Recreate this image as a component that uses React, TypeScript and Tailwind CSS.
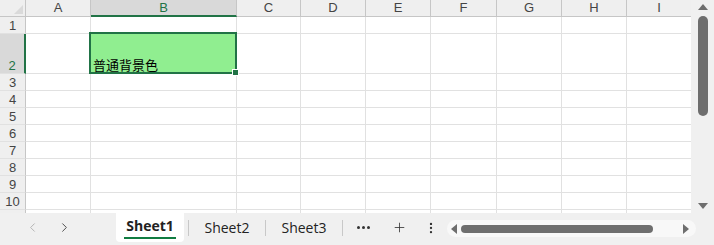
import { ChevronLeft, ChevronRight, Plus, MoreVertical } from 'lucide-react'

const cols = [
  { name: 'A', w: 65 },
  { name: 'B', w: 146 },
  { name: 'C', w: 64 },
  { name: 'D', w: 65 },
  { name: 'E', w: 65 },
  { name: 'F', w: 66 },
  { name: 'G', w: 65 },
  { name: 'H', w: 65 },
  { name: 'I', w: 65 },
]

const rows = [
  { n: '1', h: 17 },
  { n: '2', h: 40 },
  { n: '3', h: 17 },
  { n: '4', h: 17 },
  { n: '5', h: 17 },
  { n: '6', h: 17 },
  { n: '7', h: 17 },
  { n: '8', h: 17 },
  { n: '9', h: 17 },
  { n: '10', h: 17 },
  { n: '', h: 17 },
]

const font = { fontFamily: '"Liberation Sans", Arial, sans-serif' }

function Grid() {
  return (
    <div className="relative flex-1 h-[213px] overflow-hidden bg-white" style={font}>
      {/* column headers */}
      <div className="flex h-[17px]">
        <div className="relative w-[26px] shrink-0 bg-[#efefef] border-r border-b border-[#c6c6c6]">
          <div className="absolute right-[2px] bottom-[2px] w-0 h-0 border-l-[9px] border-l-transparent border-b-[9px] border-b-[#dadada]" />
        </div>
        {cols.map((c) => (
          <div
            key={c.name}
            style={{ width: c.w }}
            className={
              c.name === 'B'
                ? 'shrink-0 flex items-center justify-center text-[13px] bg-[#d9d9d9] text-[#217346] border-r border-[#c6c6c6] border-b-2 border-b-[#217346]'
                : 'shrink-0 flex items-center justify-center text-[13px] bg-[#efefef] text-[#444] border-r border-b border-[#c6c6c6]'
            }
          >
            {c.name}
          </div>
        ))}
      </div>
      {rows.map((r) => (
        <div key={r.n + 'r'} className="flex" style={{ height: r.h }}>
          <div
            className={
              r.n === '2'
                ? 'w-[26px] shrink-0 flex items-end justify-center text-[13px] leading-[15px] bg-[#d9d9d9] text-[#217346] border-r-2 border-r-[#217346] border-b border-b-[#e1e1e1]'
                : 'w-[26px] shrink-0 flex items-end justify-center text-[13px] leading-[15px] bg-[#efefef] text-[#444] border-r border-r-[#c6c6c6] border-b border-b-[#e1e1e1]'
            }
          >
            {r.n}
          </div>
          {cols.map((c) => (
            <div
              key={c.name}
              style={{ width: c.w }}
              className={
                r.n === '2' && c.name === 'B'
                  ? 'shrink-0 bg-[#90ee90] border-r border-b border-[#e1e1e1]'
                  : 'shrink-0 border-r border-b border-[#e1e1e1]'
              }
            />
          ))}
        </div>
      ))}
      {/* selection */}
      <div className="absolute left-[89px] top-[32px] w-[148px] h-[42px] border-2 border-[#217346] flex items-end pl-[2px]">
        <span
          className="text-[13px] leading-[14px] text-black"
          style={{ fontFamily: '"Noto Sans CJK SC", "Noto Sans", sans-serif' }}
        >
          普通背景色
        </span>
        <div className="absolute right-[-4px] bottom-[-4px] w-[7px] h-[7px] bg-[#217346] border border-white" />
      </div>
    </div>
  )
}

function VScroll() {
  return (
    <div className="w-[23px] h-[213px] bg-[#f0f0f0] flex flex-col items-center pt-[4px]">
      <div className="w-0 h-0 border-l-[5px] border-r-[5px] border-b-[6px] border-l-transparent border-r-transparent border-b-[#6e6e6e]" />
      <div className="mt-[6px] w-[10px] h-[100px] rounded-full bg-[#6e6e6e]" />
      <div className="flex-1" />
      <div className="mb-[4px] w-0 h-0 border-l-[5px] border-r-[5px] border-t-[6px] border-l-transparent border-r-transparent border-t-[#6e6e6e]" />
    </div>
  )
}

function TabBar() {
  const tabFont = { fontFamily: '"Open Sans", "Noto Sans", sans-serif' }
  return (
    <div className="h-[32px] bg-[#f0f0f0] flex items-start" style={tabFont}>
      <div className="w-[116px] h-[29px] flex items-center pl-[25px] gap-[17px]">
        <ChevronLeft size={15} strokeWidth={1.5} className="text-[#b0b0b0]" />
        <ChevronRight size={15} strokeWidth={1.5} className="text-[#444]" />
      </div>
      <div className="w-[68px] h-[29px] bg-white rounded-b-[4px] flex flex-col items-center justify-center">
        <span className="text-[14px] font-bold text-[#222] leading-[18px]">Sheet1</span>
        <div className="w-[52px] h-[2px] bg-[#107c41] mt-[2px]" />
      </div>
      <div className="w-px h-[16px] bg-[#c8c8c8] mt-[7px] ml-[4px]" />
      <div className="w-[76px] h-[29px] flex items-center justify-center text-[14px] text-[#222]">Sheet2</div>
      <div className="w-px h-[16px] bg-[#c8c8c8] mt-[7px]" />
      <div className="w-[76px] h-[29px] flex items-center justify-center text-[14px] text-[#222]">Sheet3</div>
      <div className="w-px h-[16px] bg-[#c8c8c8] mt-[7px]" />
      <div className="w-[40px] h-[29px] flex items-center justify-center gap-[2px]">
        <span className="w-[3px] h-[3px] rounded-full bg-[#333]" />
        <span className="w-[3px] h-[3px] rounded-full bg-[#333]" />
        <span className="w-[3px] h-[3px] rounded-full bg-[#333]" />
      </div>
      <div className="w-[32px] h-[29px] flex items-center justify-center">
        <Plus size={15} strokeWidth={1.3} className="text-[#333]" />
      </div>
      <div className="w-[32px] h-[29px] flex items-center justify-center">
        <MoreVertical size={14} strokeWidth={2} className="text-[#333]" />
      </div>
      <div className="mt-[7px] w-[249px] h-[17px] rounded-full bg-[#f8f8f8] flex items-center px-[4px]">
        <div className="w-0 h-0 border-t-[5px] border-b-[5px] border-r-[6px] border-t-transparent border-b-transparent border-r-[#6e6e6e]" />
        <div className="ml-[4px] w-[192px] h-[8px] rounded-full bg-[#6e6e6e]" />
        <div className="flex-1" />
        <div className="mr-[3px] w-0 h-0 border-t-[5px] border-b-[5px] border-l-[6px] border-t-transparent border-b-transparent border-l-[#6e6e6e]" />
      </div>
    </div>
  )
}

export default function App() {
  return (
    <div className="w-[714px] h-[245px] overflow-hidden bg-[#f0f0f0] flex flex-col">
      <div className="flex">
        <Grid />
        <VScroll />
      </div>
      <TabBar />
    </div>
  )
}
